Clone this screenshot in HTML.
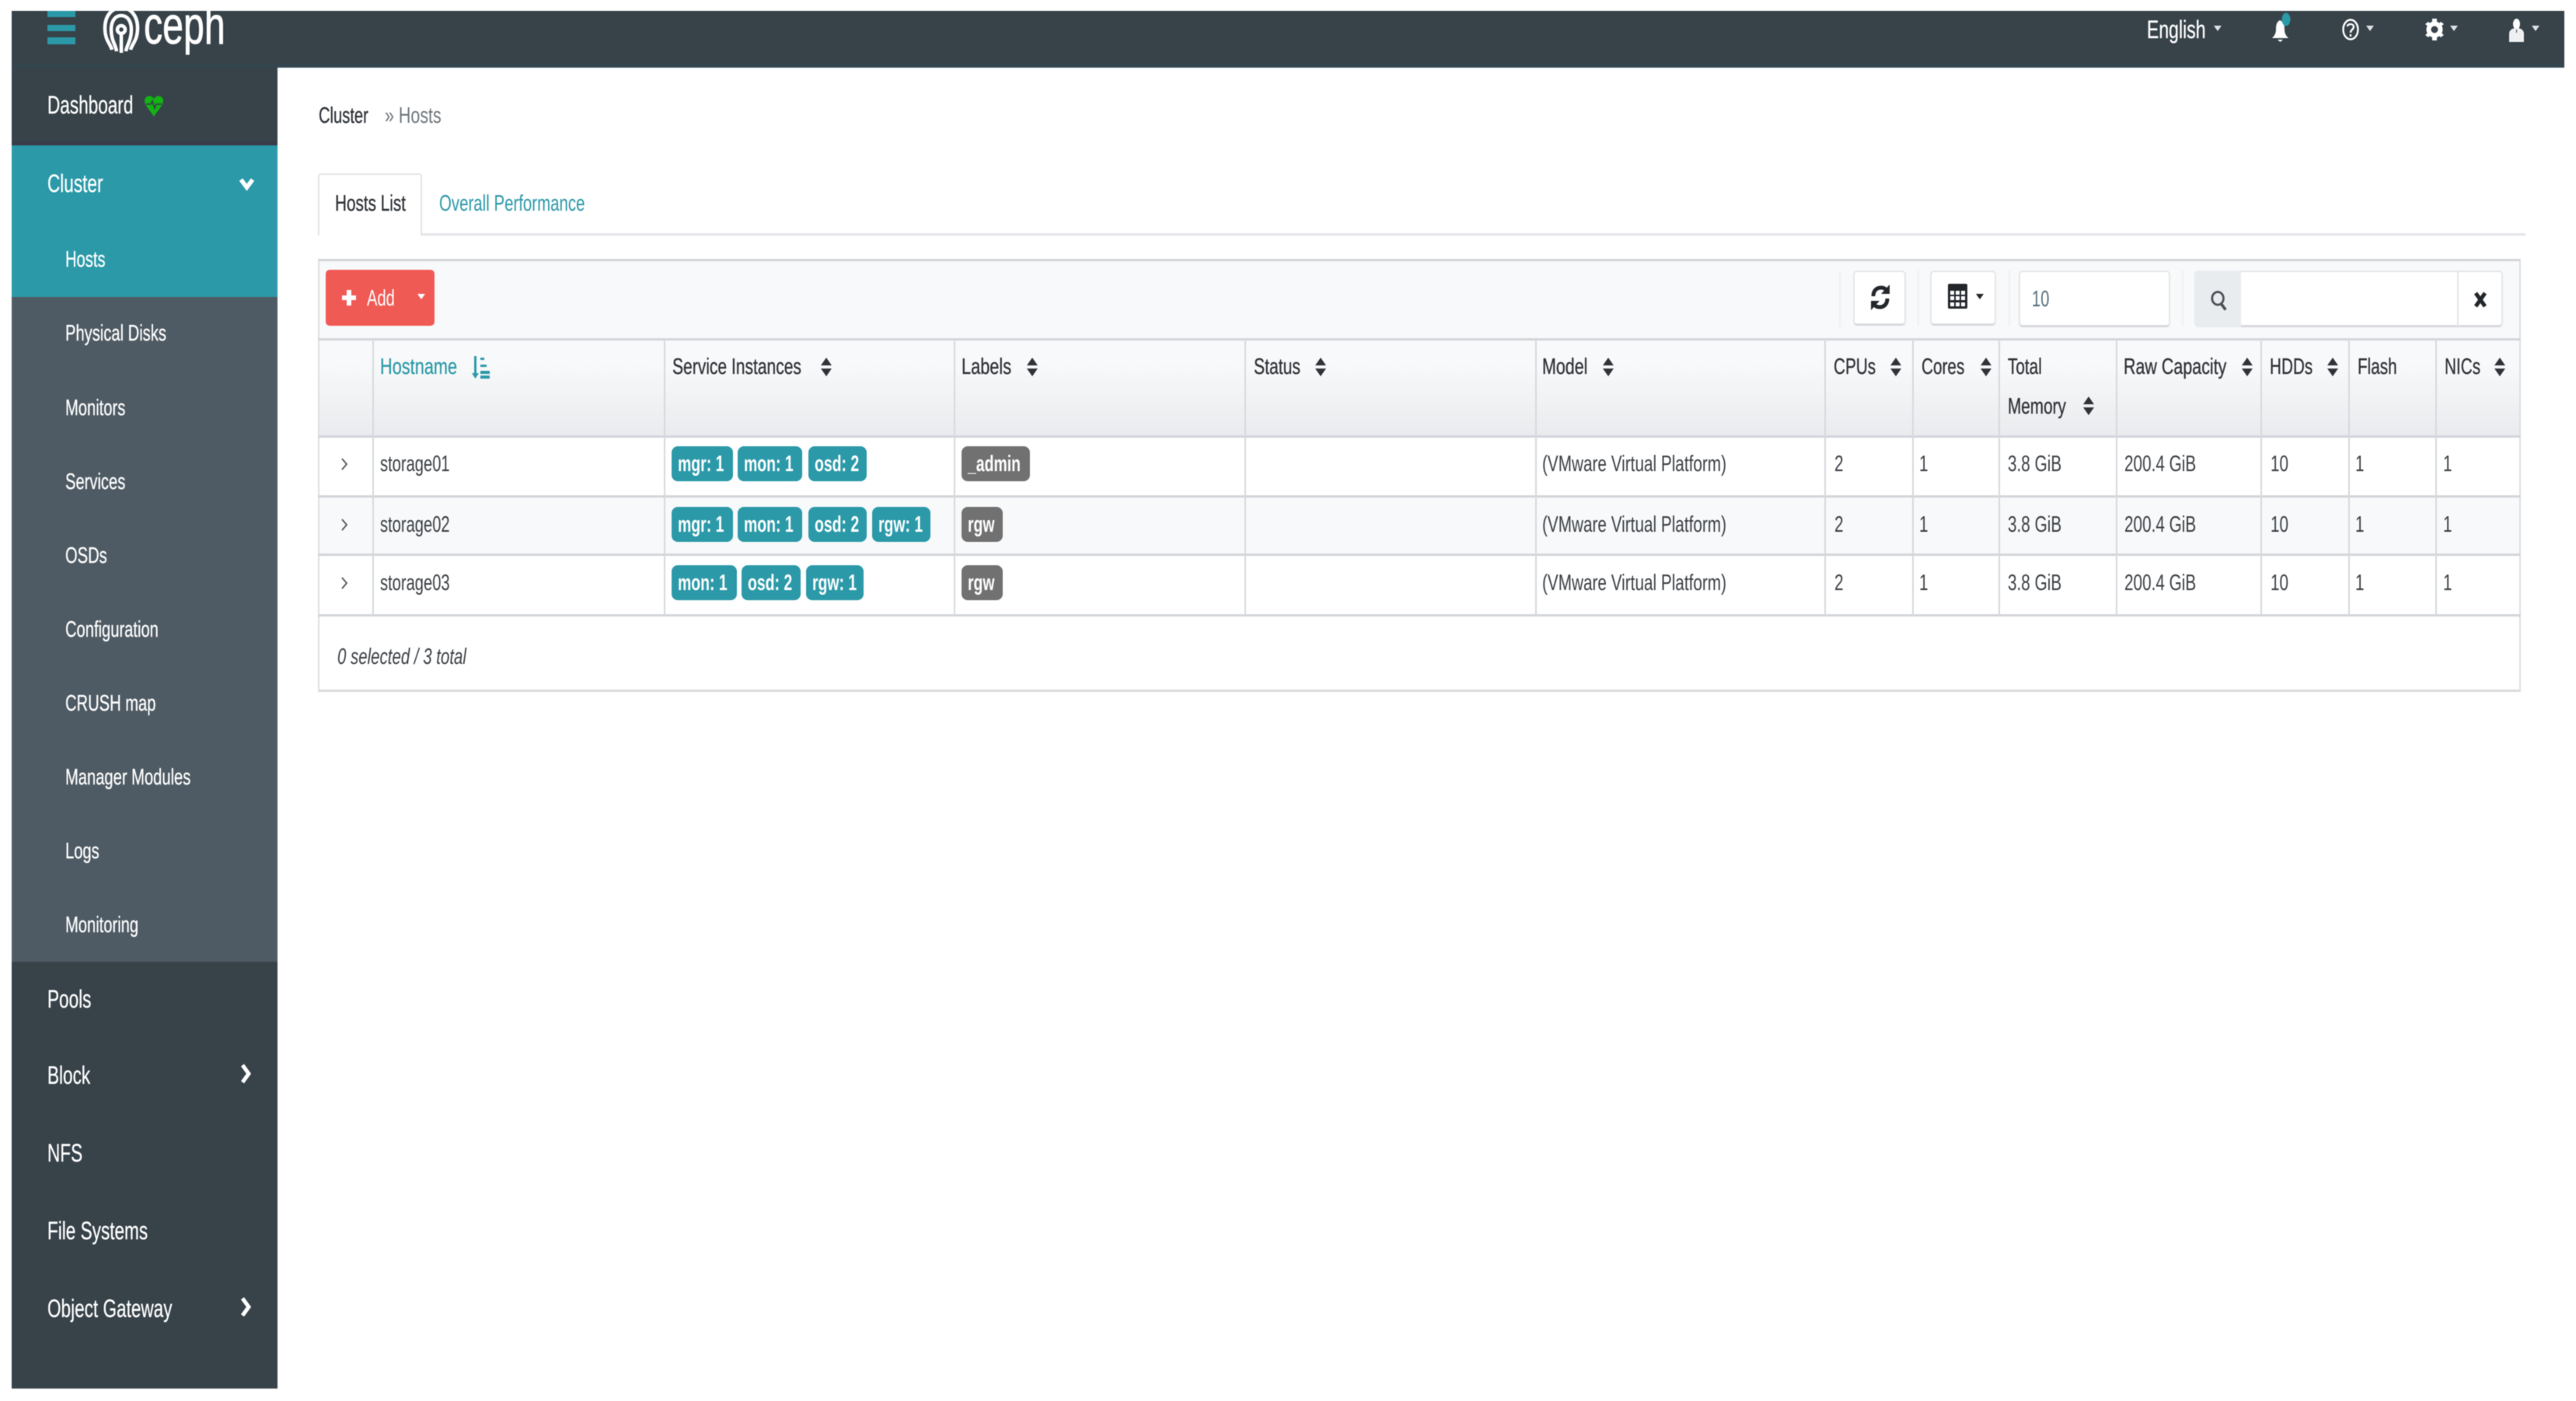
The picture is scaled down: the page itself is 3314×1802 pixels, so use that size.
<!DOCTYPE html>
<html lang="en">
<head>
<meta charset="utf-8">
<title>Ceph Hosts</title>
<style>
html,body{margin:0;padding:0;background:#fff;width:3314px;height:1802px;overflow:hidden}
#w{position:relative;width:3314px;height:1802px;overflow:hidden;font-family:"Liberation Sans",sans-serif;color:#3a3f44;filter:blur(.55px)}
#w div,#w svg,.t{position:absolute}
.t{white-space:nowrap;line-height:0;font-size:29px;transform:scaleX(.715);transform-origin:0 0}
.n{font-size:32px;color:#fff;transform:scaleX(.705);-webkit-text-stroke:.3px #fff}
.u{font-size:29px;color:#fff;transform:scaleX(.695);-webkit-text-stroke:.3px #fff}
.h{color:#2f3338;-webkit-text-stroke:.35px #2f3338}
.b{color:#fff;font-weight:bold;font-size:29px;transform:scaleX(.67)}
.bd{background:#2b99a8;border-radius:8px;height:45px}
.g{background:#717171}
.v{width:2px;background:#d6d9dd;top:436px;height:355px}
.l{left:409px;width:2834px;height:3px;background:#d2d5d9}
.s{width:14px;height:24px;fill:#2f3338}
.sep{width:2px;top:348px;height:72px;background:#eff0f2}
</style>
</head>
<body>
<div id="w">
  <!-- top bar -->
  <div style="left:15px;top:14px;width:3284px;height:73px;background:#374249;overflow:hidden">
    <div style="left:0;top:68px;width:3284px;height:5px;background:#33454e"></div>
    <div style="left:46px;top:0;width:36px;height:8px;background:#2b99a8"></div>
    <div style="left:46px;top:18px;width:36px;height:8px;background:#2b99a8"></div>
    <div style="left:46px;top:34px;width:36px;height:9px;background:#2b99a8"></div>
    <svg style="left:116px;top:-6px" width="50" height="66" viewBox="115 -6 50 66" fill="none" stroke="#fff" stroke-width="4.5">
      <path d="M128 50C126 42 119 38 119 22C119 6 128 -4 140 -4C152 -4 161 6 161 22C161 38 154 42 152 50"/>
      <path d="M134 52C133 44 127 38 127 24C127 12 133 6 140 6C147 6 153 12 153 24C153 38 147 44 146 52"/>
      <circle cx="140" cy="24" r="5"/>
      <path d="M140 29V54"/>
    </svg>
    <span class="t" style="left:170px;top:19px;font-size:68px;color:#fff;transform:scaleX(.71);-webkit-text-stroke:.9px #fff">ceph</span>
  </div>
  <!-- top right -->
  <span class="t n" style="left:2762px;top:38px;transform:scaleX(.72)">English</span>
  <svg style="left:2848px;top:33px" width="10" height="7"><path d="M0 0H10L5 7Z" fill="#dfe3e6"/></svg>
  <svg style="left:2922px;top:16px" width="28" height="40" viewBox="0 0 28 40">
    <path d="M11 10C7 12 6 16 6 22C6 27 4 30 1 33H22C19 30 17 27 17 22C17 16 16 12 11 10Z" fill="#fff"/>
    <path d="M8 35H15L11.500 38Z" fill="#fff"/>
    <ellipse cx="19" cy="9" rx="5.500" ry="8.500" fill="#2b99a8"/>
  </svg>
  <svg style="left:3012px;top:23px" width="24" height="30" viewBox="0 0 24 30" fill="none" stroke="#fff" stroke-width="2.400">
    <ellipse cx="12" cy="15" rx="9.500" ry="12.500"/>
    <path d="M8 11C8 7 16 7 16 11.500C16 15 12 15 12 19M12 21V24"/>
  </svg>
  <svg style="left:3044px;top:33px" width="10" height="7"><path d="M0 0H10L5 7Z" fill="#dfe3e6"/></svg>
  <svg style="left:3120px;top:23px" width="24" height="30" viewBox="0 0 24 30">
    <circle cx="12" cy="15" r="7.500" fill="none" stroke="#fff" stroke-width="6"/>
    <path d="M9 1H15V6H9ZM9 24H15V29H9ZM0 8L4 5L8 9L5 12ZM24 8L20 5L16 9L19 12ZM0 22L4 25L8 21L5 18ZM24 22L20 25L16 21L19 18Z" fill="#fff"/>
  </svg>
  <svg style="left:3152px;top:33px" width="10" height="7"><path d="M0 0H10L5 7Z" fill="#dfe3e6"/></svg>
  <svg style="left:3228px;top:24px" width="19" height="30" viewBox="0 0 19 30">
    <ellipse cx="9.500" cy="7" rx="4.500" ry="7" fill="#fff"/>
    <path d="M0 30V19C0 15 4 12 9.500 12C15 12 19 15 19 19V30Z" fill="#eef0f2"/>
    <path d="M9 14H10V18H9Z" fill="#374249"/>
  </svg>
  <svg style="left:3257px;top:33px" width="10" height="7"><path d="M0 0H10L5 7Z" fill="#dfe3e6"/></svg>

  <!-- sidebar -->
  <div style="left:15px;top:87px;width:342px;height:1699px;background:#374249"></div>
  <div style="left:15px;top:183px;width:342px;height:4px;background:#3a3a48"></div>
  <div style="left:15px;top:187px;width:342px;height:195px;background:#2b99a8"></div>
  <div style="left:15px;top:382px;width:342px;height:855px;background:#4f5b64"></div>

  <span class="t n" style="left:61px;top:135px">Dashboard</span>
  <svg style="left:186px;top:121px" width="24" height="30" viewBox="0 0 24 30">
    <path d="M12 6C9 1 1 1 0 8C0 15 8 22 12 29C16 22 24 15 24 8C23 1 15 1 12 6Z" fill="#12b312"/>
    <path d="M2 13H8L10 9L13 18L15 13H22" fill="none" stroke="#374249" stroke-width="1.800"/>
  </svg>
  <span class="t n" style="left:61px;top:236px">Cluster</span>
  <svg style="left:307px;top:227px" width="21" height="19" viewBox="0 0 21 19"><path d="M3 4L10.500 14L18 4" fill="none" stroke="#fff" stroke-width="5.500"/></svg>
  <span class="t u" style="left:84px;top:334px">Hosts</span>
  <span class="t u" style="left:84px;top:429px">Physical Disks</span>
  <span class="t u" style="left:84px;top:525px">Monitors</span>
  <span class="t u" style="left:84px;top:620px">Services</span>
  <span class="t u" style="left:84px;top:715px">OSDs</span>
  <span class="t u" style="left:84px;top:810px">Configuration</span>
  <span class="t u" style="left:84px;top:905px">CRUSH map</span>
  <span class="t u" style="left:84px;top:1000px">Manager Modules</span>
  <span class="t u" style="left:84px;top:1095px">Logs</span>
  <span class="t u" style="left:84px;top:1190px">Monitoring</span>
  <span class="t n" style="left:61px;top:1285px">Pools</span>
  <span class="t n" style="left:61px;top:1383px">Block</span>
  <span class="t n" style="left:61px;top:1483px">NFS</span>
  <span class="t n" style="left:61px;top:1583px">File Systems</span>
  <span class="t n" style="left:61px;top:1683px">Object Gateway</span>
  <svg style="left:308px;top:1367px" width="16" height="28" viewBox="0 0 16 28"><path d="M4 3L12 14L4 25" fill="none" stroke="#fff" stroke-width="5"/></svg>
  <svg style="left:308px;top:1667px" width="16" height="28" viewBox="0 0 16 28"><path d="M4 3L12 14L4 25" fill="none" stroke="#fff" stroke-width="5"/></svg>

  <!-- breadcrumb -->
  <span class="t h" style="left:410px;top:149px;transform:scaleX(.695)">Cluster</span>
  <span class="t" style="left:495px;top:149px;color:#6f767c;transform:scaleX(.74)">» Hosts</span>

  <!-- tabs -->
  <div style="left:409px;top:300px;width:2840px;height:3px;background:#e3e5e8"></div>
  <div style="left:409px;top:223px;width:134px;height:80px;background:#fff;border:2px solid #e3e5e8;border-bottom:0;box-sizing:border-box;border-radius:4px 4px 0 0"></div>
  <span class="t h" style="left:431px;top:262px">Hosts List</span>
  <span class="t" style="left:565px;top:262px;color:#2b99a8;transform:scaleX(.705)">Overall Performance</span>

  <!-- table wrap -->
  <div style="left:409px;top:333px;width:2834px;height:557px;border:2px solid #dcdfe3;border-top:3px solid #d2d5d9;border-bottom:3px solid #d8dadd;box-sizing:border-box;background:#fff"></div>
  <div style="left:411px;top:336px;width:2830px;height:100px;background:#f8f9fa"></div>

  <!-- add btn -->
  <div style="left:419px;top:347px;width:140px;height:72px;background:#f05a54;border-radius:5px"></div>
  <svg style="left:440px;top:373px" width="18" height="20" viewBox="0 0 18 20"><path d="M6 0H12V7H18V13H12V20H6V13H0V7H6Z" fill="#fff"/></svg>
  <span class="t" style="left:472px;top:384px;color:#fff;transform:scaleX(.695)">Add</span>
  <svg style="left:537px;top:378px" width="10" height="7"><path d="M0 0H10L5 7Z" fill="#fff"/></svg>

  <!-- toolbar right -->
  <div class="sep" style="left:2366px"></div>
  <div class="sep" style="left:2467px"></div>
  <div class="sep" style="left:2584px"></div>
  <div class="sep" style="left:2807px"></div>
  <div style="left:2384px;top:348px;width:68px;height:71px;background:#fff;border:2px solid #e4e6e9;border-bottom:3px solid #d8dadd;box-sizing:border-box;border-radius:5px"></div>
  <svg style="left:2406px;top:364px" width="26" height="37" viewBox="0 0 26 37" fill="none" stroke="#23272b" stroke-width="5">
    <path d="M4 17C4 9 9 6 14 6C18 6 20 8 22 10"/>
    <path d="M22 20C22 28 17 31 12 31C8 31 6 29 4 27"/>
    <path d="M25 2V14H14Z" fill="#23272b" stroke="none"/>
    <path d="M1 35V23H12Z" fill="#23272b" stroke="none"/>
  </svg>
  <div style="left:2483px;top:348px;width:85px;height:71px;background:#fff;border:2px solid #e4e6e9;border-bottom:3px solid #d8dadd;box-sizing:border-box;border-radius:5px"></div>
  <svg style="left:2506px;top:365px" width="25" height="32" viewBox="0 0 25 32">
    <path d="M2 0H23Q25 0 25 2V30Q25 32 23 32H2Q0 32 0 30V2Q0 0 2 0Z" fill="#23272b"/>
    <path d="M3 9H8V14H3ZM10 9H15V14H10ZM17 9H22V14H17ZM3 16H8V21H3ZM10 16H15V21H10ZM17 16H22V21H17ZM3 24H8V29H3ZM10 24H15V29H10ZM17 24H22V29H17Z" fill="#fff"/>
  </svg>
  <svg style="left:2542px;top:378px" width="10" height="7"><path d="M0 0H10L5 7Z" fill="#23272b"/></svg>
  <div style="left:2597px;top:348px;width:195px;height:73px;background:#fff;border:2px solid #e4e6e9;border-bottom:3px solid #d8dadd;box-sizing:border-box;border-radius:5px"></div>
  <span class="t" style="left:2614px;top:385px;color:#55707e;transform:scaleX(.695)">10</span>
  <div style="left:2823px;top:348px;width:397px;height:73px;background:#fff;border:2px solid #e4e6e9;border-bottom:3px solid #d8dadd;box-sizing:border-box;border-radius:5px"></div>
  <div style="left:2823px;top:348px;width:60px;height:73px;background:#e9ecef;border-radius:5px 0 0 5px"></div>
  <div style="left:3161px;top:348px;width:2px;height:72px;background:#e4e6e9"></div>
  <svg style="left:2844px;top:371px" width="22" height="31" viewBox="0 0 24 28" fill="none" stroke="#4a5056" stroke-width="3">
    <ellipse cx="10" cy="11" rx="8" ry="9"/><path d="M15 19L21 27" stroke-width="4"/>
  </svg>
  <svg style="left:3183px;top:375px" width="16" height="21" viewBox="0 0 16 21"><path d="M2 2L14 19M14 2L2 19" fill="none" stroke="#23272b" stroke-width="5"/></svg>

  <!-- table header -->
  <div style="left:411px;top:438px;width:2830px;height:123px;background:linear-gradient(#f8f9fa 25%,#e9ebee)"></div>
  <div style="left:411px;top:639px;width:2830px;height:74px;background:#f8f9fa"></div>
  <div class="l" style="top:435px"></div>
  <div class="l" style="top:560px"></div>
  <div class="l" style="top:637px"></div>
  <div class="l" style="top:712px"></div>
  <div class="l" style="top:790px"></div>

  <div class="v" style="left:479px"></div>
  <div class="v" style="left:854px"></div>
  <div class="v" style="left:1227px"></div>
  <div class="v" style="left:1601px"></div>
  <div class="v" style="left:1975px"></div>
  <div class="v" style="left:2347px"></div>
  <div class="v" style="left:2460px"></div>
  <div class="v" style="left:2571px"></div>
  <div class="v" style="left:2722px"></div>
  <div class="v" style="left:2908px"></div>
  <div class="v" style="left:3021px"></div>
  <div class="v" style="left:3133px"></div>

  <span class="t" style="left:489px;top:472px;color:#2b99a8;transform:scaleX(.75);-webkit-text-stroke:.25px #2b99a8">Hostname</span>
  <svg style="left:607px;top:457px" width="24" height="31" viewBox="0 0 24 31" fill="#2b99a8">
    <path d="M3 1H6V23H9L4.500 30L0 23H3Z"/><path d="M11 3H16V6H11ZM11 12H19V15H11ZM11 20H23V24H11ZM11 26H23V30H11Z"/>
  </svg>
  <span class="t h" style="left:865px;top:472px;transform:scaleX(.725)">Service Instances</span>
  <span class="t h" style="left:1237px;top:472px;transform:scaleX(.75)">Labels</span>
  <span class="t h" style="left:1613px;top:472px;transform:scaleX(.73)">Status</span>
  <span class="t h" style="left:1984px;top:472px;transform:scaleX(.74)">Model</span>
  <span class="t h" style="left:2359px;top:472px">CPUs</span>
  <span class="t h" style="left:2472px;top:472px">Cores</span>
  <span class="t h" style="left:2583px;top:472px">Total</span>
  <span class="t h" style="left:2583px;top:523px">Memory</span>
  <span class="t h" style="left:2732px;top:472px;transform:scaleX(.74)">Raw Capacity</span>
  <span class="t h" style="left:2920px;top:472px">HDDs</span>
  <span class="t h" style="left:3033px;top:472px">Flash</span>
  <span class="t h" style="left:3145px;top:472px">NICs</span>

  <svg class="s" style="left:1056px;top:460px"><path d="M7 0L14 10H0ZM7 24L0 14H14Z"/></svg>
  <svg class="s" style="left:1321px;top:460px"><path d="M7 0L14 10H0ZM7 24L0 14H14Z"/></svg>
  <svg class="s" style="left:1692px;top:460px"><path d="M7 0L14 10H0ZM7 24L0 14H14Z"/></svg>
  <svg class="s" style="left:2062px;top:460px"><path d="M7 0L14 10H0ZM7 24L0 14H14Z"/></svg>
  <svg class="s" style="left:2432px;top:460px"><path d="M7 0L14 10H0ZM7 24L0 14H14Z"/></svg>
  <svg class="s" style="left:2548px;top:460px"><path d="M7 0L14 10H0ZM7 24L0 14H14Z"/></svg>
  <svg class="s" style="left:2680px;top:510px"><path d="M7 0L14 10H0ZM7 24L0 14H14Z"/></svg>
  <svg class="s" style="left:2884px;top:460px"><path d="M7 0L14 10H0ZM7 24L0 14H14Z"/></svg>
  <svg class="s" style="left:2994px;top:460px"><path d="M7 0L14 10H0ZM7 24L0 14H14Z"/></svg>
  <svg class="s" style="left:3209px;top:460px"><path d="M7 0L14 10H0ZM7 24L0 14H14Z"/></svg>

  <!-- row 1 -->
  <svg style="left:438px;top:588px" width="10" height="18" viewBox="0 0 10 18"><path d="M2 2L8 9L2 16" fill="none" stroke="#555" stroke-width="1.800"/></svg>
  <span class="t" style="left:489px;top:597px;transform:scaleX(.695)">storage01</span>
  <div class="bd" style="left:864px;top:574px;width:79px"></div><span class="t b" style="left:872px;top:597px">mgr: 1</span>
  <div class="bd" style="left:949px;top:574px;width:83px"></div><span class="t b" style="left:957px;top:597px">mon: 1</span>
  <div class="bd" style="left:1040px;top:574px;width:75px"></div><span class="t b" style="left:1048px;top:597px">osd: 2</span>
  <div class="bd g" style="left:1237px;top:574px;width:88px"></div><span class="t b" style="left:1245px;top:597px">_admin</span>
  <span class="t" style="left:1984px;top:597px">(VMware Virtual Platform)</span>
  <span class="t" style="left:2360px;top:597px">2</span>
  <span class="t" style="left:2469px;top:597px">1</span>
  <span class="t" style="left:2583px;top:597px">3.8 GiB</span>
  <span class="t" style="left:2733px;top:597px">200.4 GiB</span>
  <span class="t" style="left:2921px;top:597px">10</span>
  <span class="t" style="left:3030px;top:597px">1</span>
  <span class="t" style="left:3143px;top:597px">1</span>

  <!-- row 2 -->
  <svg style="left:438px;top:666px" width="10" height="18" viewBox="0 0 10 18"><path d="M2 2L8 9L2 16" fill="none" stroke="#555" stroke-width="1.800"/></svg>
  <span class="t" style="left:489px;top:675px;transform:scaleX(.695)">storage02</span>
  <div class="bd" style="left:864px;top:652px;width:79px"></div><span class="t b" style="left:872px;top:675px">mgr: 1</span>
  <div class="bd" style="left:949px;top:652px;width:83px"></div><span class="t b" style="left:957px;top:675px">mon: 1</span>
  <div class="bd" style="left:1040px;top:652px;width:75px"></div><span class="t b" style="left:1048px;top:675px">osd: 2</span>
  <div class="bd" style="left:1122px;top:652px;width:75px"></div><span class="t b" style="left:1130px;top:675px">rgw: 1</span>
  <div class="bd g" style="left:1237px;top:652px;width:53px"></div><span class="t b" style="left:1245px;top:675px">rgw</span>
  <span class="t" style="left:1984px;top:675px">(VMware Virtual Platform)</span>
  <span class="t" style="left:2360px;top:675px">2</span>
  <span class="t" style="left:2469px;top:675px">1</span>
  <span class="t" style="left:2583px;top:675px">3.8 GiB</span>
  <span class="t" style="left:2733px;top:675px">200.4 GiB</span>
  <span class="t" style="left:2921px;top:675px">10</span>
  <span class="t" style="left:3030px;top:675px">1</span>
  <span class="t" style="left:3143px;top:675px">1</span>

  <!-- row 3 -->
  <svg style="left:438px;top:741px" width="10" height="18" viewBox="0 0 10 18"><path d="M2 2L8 9L2 16" fill="none" stroke="#555" stroke-width="1.800"/></svg>
  <span class="t" style="left:489px;top:750px;transform:scaleX(.695)">storage03</span>
  <div class="bd" style="left:864px;top:727px;width:84px"></div><span class="t b" style="left:872px;top:750px">mon: 1</span>
  <div class="bd" style="left:954px;top:727px;width:76px"></div><span class="t b" style="left:962px;top:750px">osd: 2</span>
  <div class="bd" style="left:1037px;top:727px;width:74px"></div><span class="t b" style="left:1045px;top:750px">rgw: 1</span>
  <div class="bd g" style="left:1237px;top:727px;width:53px"></div><span class="t b" style="left:1245px;top:750px">rgw</span>
  <span class="t" style="left:1984px;top:750px">(VMware Virtual Platform)</span>
  <span class="t" style="left:2360px;top:750px">2</span>
  <span class="t" style="left:2469px;top:750px">1</span>
  <span class="t" style="left:2583px;top:750px">3.8 GiB</span>
  <span class="t" style="left:2733px;top:750px">200.4 GiB</span>
  <span class="t" style="left:2921px;top:750px">10</span>
  <span class="t" style="left:3030px;top:750px">1</span>
  <span class="t" style="left:3143px;top:750px">1</span>

  <span class="t" style="left:434px;top:845px;font-style:italic;transform:scaleX(.705)">0 selected / 3 total</span>
</div>
</body>
</html>
